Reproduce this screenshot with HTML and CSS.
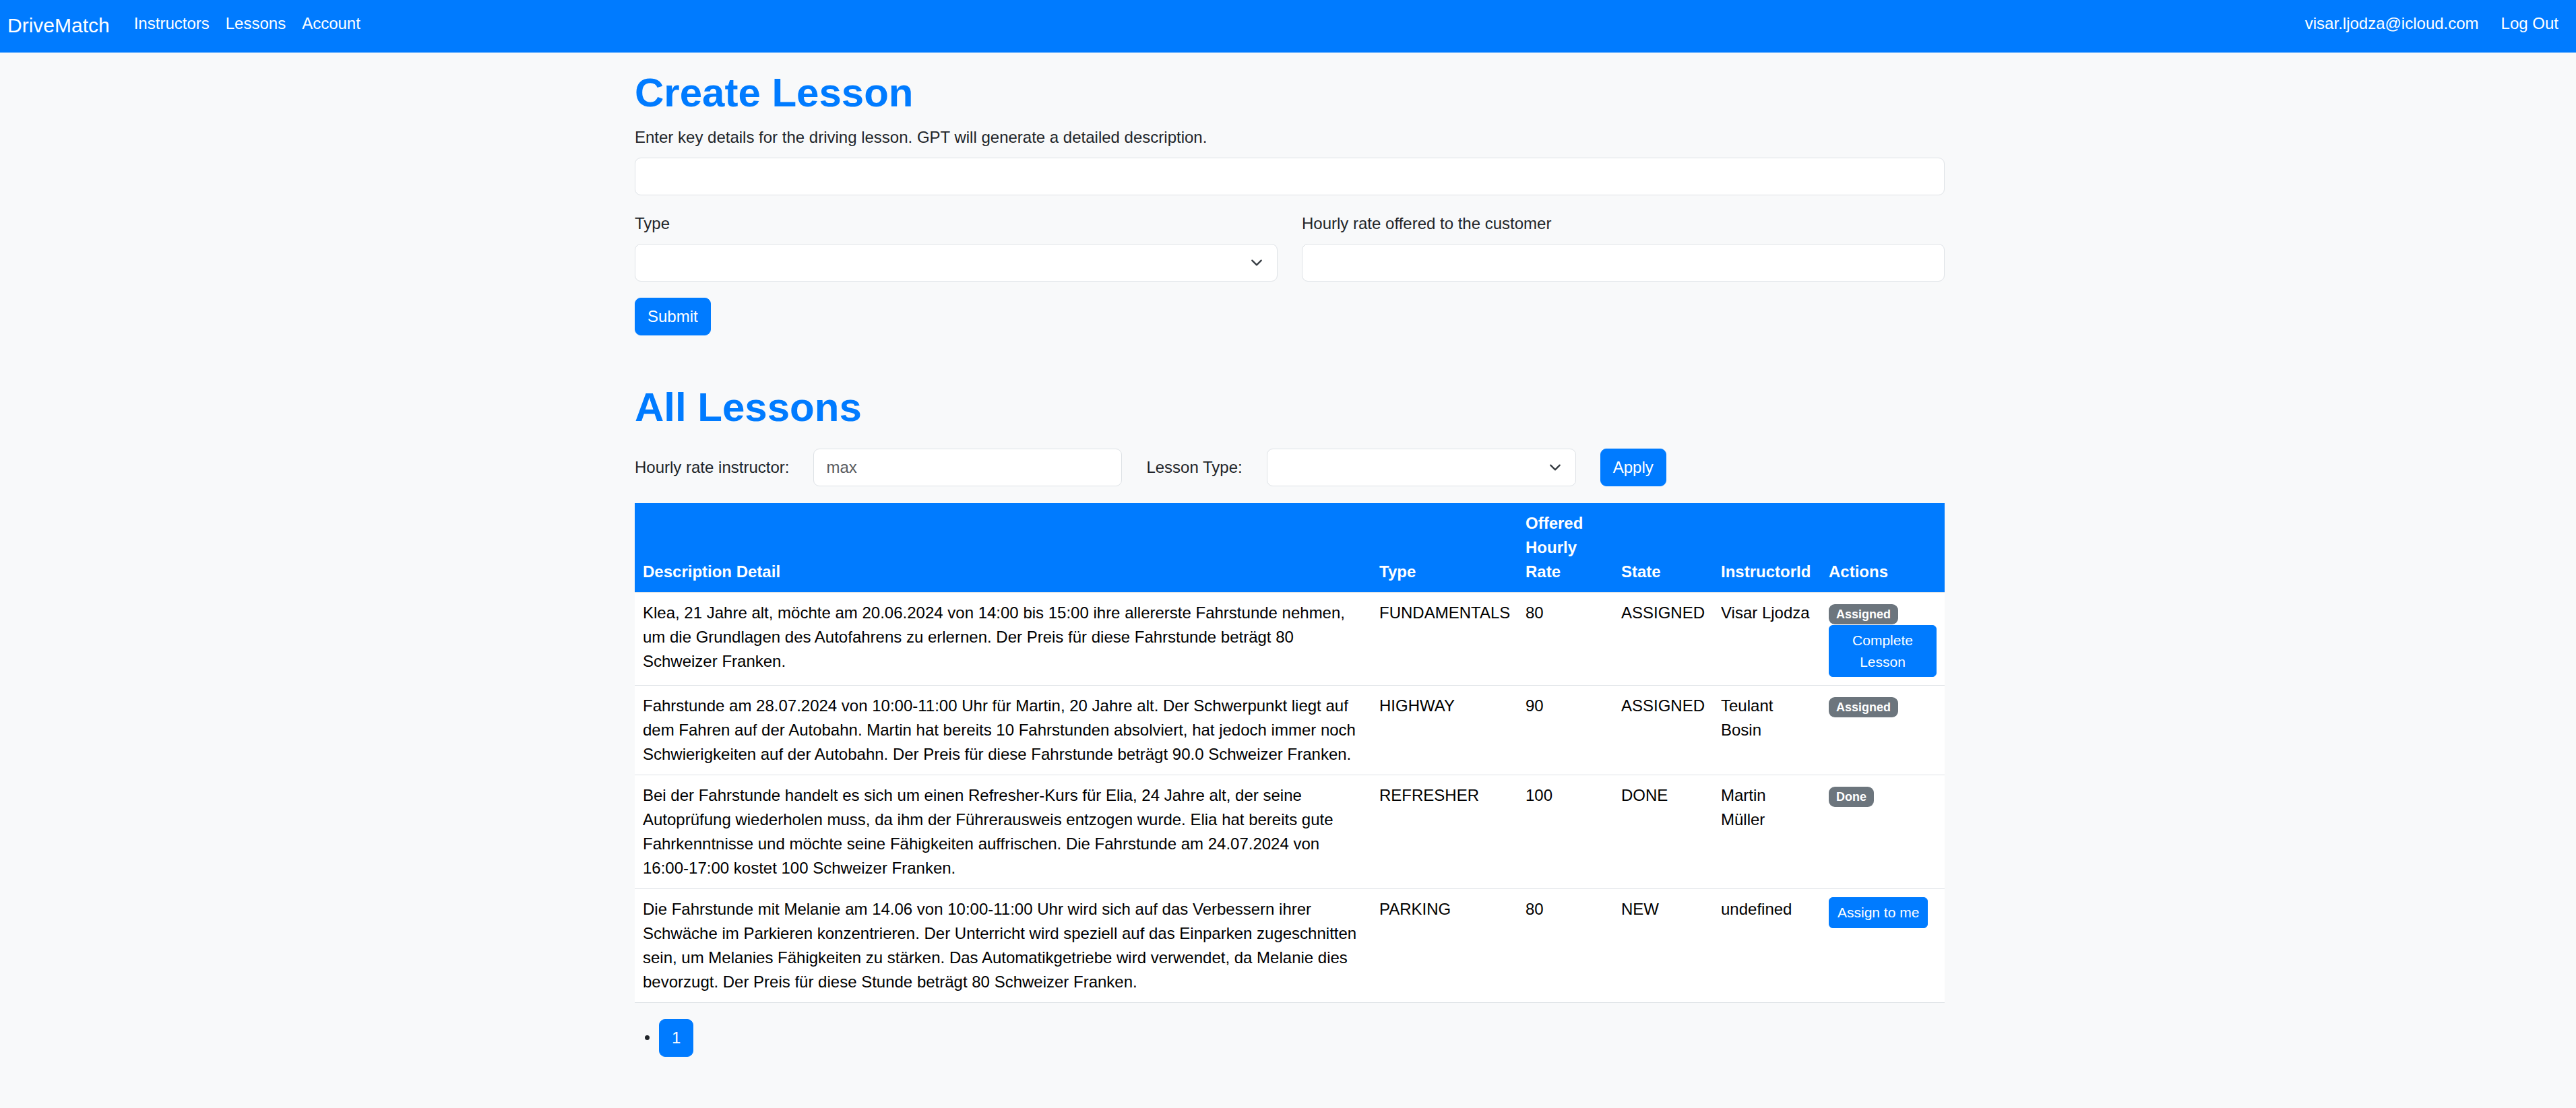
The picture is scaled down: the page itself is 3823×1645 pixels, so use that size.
FILE: index.html
```html
<!DOCTYPE html>
<html lang="en">
<head>
<meta charset="utf-8">
<title>DriveMatch</title>
<link rel="stylesheet" href="styles.css">
</head>
<body>
<nav class="navbar">
  <a class="brand" href="#">DriveMatch</a>
  <div class="nav-links">
    <a class="nav-link" href="#">Instructors</a>
    <a class="nav-link" href="#">Lessons</a>
    <a class="nav-link" href="#">Account</a>
  </div>
  <div class="nav-right">
    <span class="nav-text">visar.ljodza@icloud.com</span>
    <a class="nav-link" href="#">Log Out</a>
  </div>
</nav>

<main class="container">
  <h1 class="title">Create Lesson</h1>
  <p class="intro">Enter key details for the driving lesson. GPT will generate a detailed description.</p>
  <input class="form-control field-main" type="text">
  <div class="row">
    <div class="col">
      <label class="form-label">Type</label>
      <div class="form-select">
        <svg class="chev" width="18" height="18" viewBox="0 0 16 16"><path d="m2 5 6 6 6-6" fill="none" stroke="#343a40" stroke-width="2" stroke-linecap="round" stroke-linejoin="round"/></svg>
      </div>
    </div>
    <div class="col">
      <label class="form-label">Hourly rate offered to the customer</label>
      <input class="form-control" type="text">
    </div>
  </div>
  <button class="btn btn-primary btn-block">Submit</button>

  <h1 class="title title-lessons">All Lessons</h1>
  <form class="filters">
    <span class="filter-label">Hourly rate instructor:</span>
    <input class="form-control filter-input" type="text" placeholder="max">
    <span class="filter-label">Lesson Type:</span>
    <div class="form-select filter-select">
      <svg class="chev" width="18" height="18" viewBox="0 0 16 16"><path d="m2 5 6 6 6-6" fill="none" stroke="#343a40" stroke-width="2" stroke-linecap="round" stroke-linejoin="round"/></svg>
    </div>
    <button class="btn btn-primary" type="button">Apply</button>
  </form>

  <table class="lessons">
    <thead>
      <tr>
        <th class="c-desc">Description Detail</th>
        <th class="c-type">Type</th>
        <th class="c-rate">Offered Hourly Rate</th>
        <th class="c-state">State</th>
        <th class="c-inst">InstructorId</th>
        <th class="c-act">Actions</th>
      </tr>
    </thead>
    <tbody>
      <tr>
        <td>Klea, 21 Jahre alt, möchte am 20.06.2024 von 14:00 bis 15:00 ihre allererste Fahrstunde nehmen, um die Grundlagen des Autofahrens zu erlernen. Der Preis für diese Fahrstunde beträgt 80 Schweizer Franken.</td>
        <td>FUNDAMENTALS</td>
        <td>80</td>
        <td>ASSIGNED</td>
        <td>Visar Ljodza</td>
        <td><span class="badge">Assigned</span> <button class="btn btn-primary btn-sm" type="button">Complete Lesson</button></td>
      </tr>
      <tr>
        <td>Fahrstunde am 28.07.2024 von 10:00-11:00 Uhr für Martin, 20 Jahre alt. Der Schwerpunkt liegt auf dem Fahren auf der Autobahn. Martin hat bereits 10 Fahrstunden absolviert, hat jedoch immer noch Schwierigkeiten auf der Autobahn. Der Preis für diese Fahrstunde beträgt 90.0 Schweizer Franken.</td>
        <td>HIGHWAY</td>
        <td>90</td>
        <td>ASSIGNED</td>
        <td>Teulant Bosin</td>
        <td><span class="badge">Assigned</span></td>
      </tr>
      <tr>
        <td>Bei der Fahrstunde handelt es sich um einen Refresher-Kurs für Elia, 24 Jahre alt, der seine Autoprüfung wiederholen muss, da ihm der Führerausweis entzogen wurde. Elia hat bereits gute Fahrkenntnisse und möchte seine Fähigkeiten auffrischen. Die Fahrstunde am 24.07.2024 von 16:00-17:00 kostet 100 Schweizer Franken.</td>
        <td>REFRESHER</td>
        <td>100</td>
        <td>DONE</td>
        <td>Martin Müller</td>
        <td><span class="badge">Done</span></td>
      </tr>
      <tr>
        <td>Die Fahrstunde mit Melanie am 14.06 von 10:00-11:00 Uhr wird sich auf das Verbessern ihrer Schwäche im Parkieren konzentrieren. Der Unterricht wird speziell auf das Einparken zugeschnitten sein, um Melanies Fähigkeiten zu stärken. Das Automatikgetriebe wird verwendet, da Melanie dies bevorzugt. Der Preis für diese Stunde beträgt 80 Schweizer Franken.</td>
        <td>PARKING</td>
        <td>80</td>
        <td>NEW</td>
        <td>undefined</td>
        <td><button class="btn btn-primary btn-sm" type="button">Assign to me</button></td>
      </tr>
    </tbody>
  </table>

  <ul class="pagination">
    <li><a class="page-btn" href="#">1</a></li>
  </ul>
</main>
</body>
</html>
```

FILE: styles.css
```css
html, body {
  margin: 0;
  padding: 0;
}

body {
  background: #f8f9fa;
  font-family: "Liberation Sans", Arial, sans-serif;
  font-size: 24px;
  line-height: 1.5;
  color: #212529;
}

/* Navbar */
.navbar {
  display: flex;
  align-items: flex-start;
  height: 78px;
  box-sizing: border-box;
  padding: 0 26px 0 11px;
  background: #007bff;
}

.brand {
  font-size: 30px;
  line-height: 45px;
  color: #fff;
  text-decoration: none;
  margin-top: 15px;
  margin-right: 36px;
}

.nav-links {
  display: flex;
  gap: 24px;
  margin-top: 17px;
}

.nav-link,
.nav-text {
  color: #fff;
  text-decoration: none;
  line-height: 36px;
}

.nav-right {
  display: flex;
  gap: 33px;
  margin-left: auto;
  margin-top: 17px;
}

/* Main container */
.container {
  width: 1944px;
  margin: 0 auto;
  padding: 24px 0 0 5px;
}

.title {
  font-size: 60px;
  line-height: 72px;
  font-weight: 700;
  color: #007bff;
  margin: 0 0 12px;
}

.title-lessons {
  margin-top: 71px;
  margin-bottom: 25px;
}

.intro {
  margin: 0 0 12px;
}

.form-control {
  display: block;
  width: 100%;
  box-sizing: border-box;
  height: 56px;
  padding: 9px 18px;
  font: inherit;
  color: #212529;
  background: #fff;
  border: 1px solid #dee2e6;
  border-radius: 9px;
  outline: none;
}

.form-control::placeholder {
  color: #595c5f;
}

.field-main {
  margin-bottom: 24px;
}

.row {
  display: flex;
  gap: 36px;
  margin-bottom: 24px;
}

.col {
  flex: 1;
  min-width: 0;
}

.form-label {
  display: block;
  margin-bottom: 12px;
}

.form-select {
  display: flex;
  align-items: center;
  justify-content: flex-end;
  box-sizing: border-box;
  height: 56px;
  padding-right: 21px;
  background: #fff;
  border: 1px solid #dee2e6;
  border-radius: 9px;
}

.chev {
  display: block;
}

.btn {
  display: inline-block;
  font: inherit;
  line-height: 36px;
  padding: 9px 18px;
  border: 1px solid #007bff;
  border-radius: 9px;
  cursor: pointer;
  text-align: center;
  vertical-align: middle;
}

.btn-primary {
  background: #007bff;
  color: #fff;
}

.btn-block {
  display: block;
}

.btn-sm {
  font-size: 21px;
  line-height: 31.5px;
  padding: 6px 12px;
  border-radius: 6px;
}

/* Filters */
.filters {
  display: flex;
  align-items: center;
  gap: 36px;
  margin: 0 0 25px;
}

.filter-input {
  width: 458px;
}

.filter-select {
  width: 459px;
}

/* Table */
.lessons {
  width: 1944px;
  border-collapse: collapse;
  table-layout: fixed;
  margin-bottom: 24px;
}

.lessons th {
  box-sizing: border-box;
  background: #007bff;
  color: #fff;
  font-weight: 700;
  text-align: left;
  vertical-align: bottom;
  padding: 12px;
  border-bottom: 1px solid #dee2e6;
}

.lessons td {
  background: #fff;
  color: #000;
  vertical-align: top;
  padding: 12px;
  border-bottom: 1px solid #dee2e6;
}

.c-desc { width: 1093px; }
.c-type { width: 217px; }
.c-rate { width: 142px; }
.c-state { width: 148px; }
.c-inst { width: 160px; }
.c-act { width: 184px; }

.badge {
  display: inline-block;
  font-size: 18px;
  font-weight: 700;
  line-height: 1;
  padding: 6px 11px;
  color: #fff;
  background: #6c757d;
  border-radius: 9px;
}

/* Pagination */
.pagination {
  margin: 0;
  padding-left: 36px;
}

.page-btn {
  display: inline-block;
  padding: 9px 18px;
  line-height: 36px;
  color: #fff;
  background: #007bff;
  border: 1px solid #007bff;
  border-radius: 9px;
  text-decoration: none;
  vertical-align: middle;
}
```
